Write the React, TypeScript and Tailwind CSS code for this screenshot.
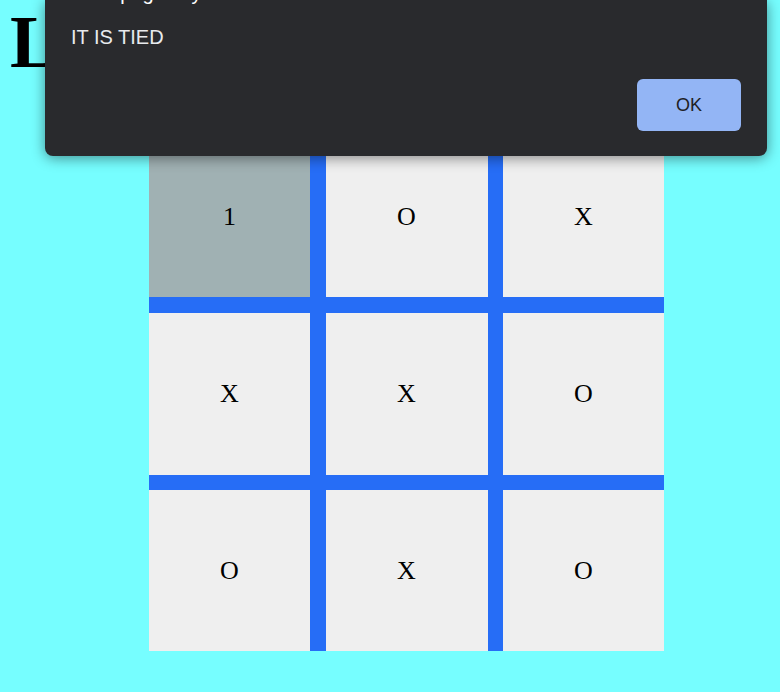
import React from "react";

const cells = ["1", "O", "X", "X", "X", "O", "O", "X", "O"];

const Cell: React.FC<{ value: string; active: boolean }> = ({ value, active }) => {
  return (
    <div
      className={
        "flex items-center justify-center text-[26px] text-black " +
        (active ? "bg-[#a0b1b3]" : "bg-[#efefef]")
      }
      style={{ fontFamily: '"Liberation Serif", "Times New Roman", serif' }}
    >
      {value}
    </div>
  );
};

const App: React.FC = () => {
  return (
    <div className="relative w-[780px] h-[692px] overflow-hidden bg-[#76feff]">
      <h1
        className="pl-[10px] pt-[5px] h-[136px] text-[74px] font-bold leading-[74px] whitespace-nowrap text-black"
        style={{ fontFamily: '"Liberation Serif", "Times New Roman", serif' }}
      >
        L
      </h1>
      <div className="ml-[149px] grid h-[515px] w-[515px] grid-cols-[161px_162px_161px] grid-rows-[161px_162px_161px] gap-x-[15.5px] gap-y-[15.5px] bg-[#266df6]">
        {cells.map((c, i) => (
          <Cell key={i} value={c} active={i === 0} />
        ))}
      </div>

      {/* alert dialog */}
      <div
        className="absolute left-[45px] top-0 h-[156px] w-[722px] overflow-hidden rounded-b-lg bg-[#292a2d] px-[26px] shadow-[0_2px_14px_rgba(0,0,0,0.45)]"
        style={{ fontFamily: '"Liberation Sans", Arial, sans-serif' }}
      >
        <div className="relative h-[26px]">
          <p className="absolute left-[6px] top-[-19px] text-[20px] leading-[24px] text-white">
            This page says
          </p>
        </div>
        <p className="text-[20px] leading-[23px] text-[#e8eaed]">IT IS TIED</p>
        <div className="flex justify-end pt-[30px]">
          <button className="flex h-[52px] w-[104px] items-center justify-center rounded-md bg-[#93b5f5] text-[18px] text-[#202124]">
            OK
          </button>
        </div>
      </div>
    </div>
  );
};

export default App;
